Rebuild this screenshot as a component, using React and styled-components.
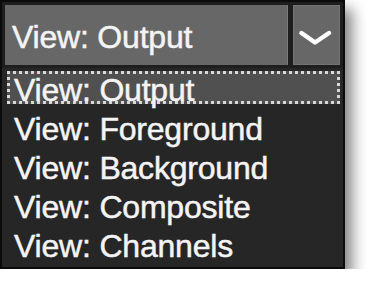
import React from 'react';
import styled, { createGlobalStyle } from 'styled-components';

const GlobalStyle = createGlobalStyle`
  html, body {
    margin: 0;
    padding: 0;
    background: #ffffff;
  }
`;

const Frame = styled.div`
  width: 341px;
  height: 265px;
  border: 2px solid #0b0b0b;
  background: #262626;
  box-shadow: 7px 9px 14px rgba(0, 0, 0, 0.5);
  display: flex;
  flex-direction: column;
  font-family: "Liberation Sans", Arial, sans-serif;
  font-size: 32px;
  letter-spacing: -0.2px;
  color: #f4f4f4;
  -webkit-text-stroke: 0.5px #f4f4f4;
`;

const Header = styled.div`
  display: flex;
  gap: 5px;
  padding: 3px;
  background: #1e1e1e;
`;

const Field = styled.div`
  flex: 1;
  height: 60px;
  box-sizing: border-box;
  padding: 4px 0 0 7px;
  line-height: 56px;
  background: #676767;
  box-shadow: inset -1px 0 0 #7a7a7a;
  white-space: nowrap;
`;

const ToggleButton = styled.div`
  width: 47px;
  height: 60px;
  display: flex;
  align-items: center;
  justify-content: center;
  background: #676767;
  box-shadow: inset 0 0 0 1px #747474;
`;

const List = styled.ul`
  list-style: none;
  margin: 0;
  padding: 3px 0 0 2px;
`;

const Item = styled.li`
  position: relative;
  isolation: isolate;
  height: 39px;
  line-height: 39px;
  padding-left: 10px;
  white-space: nowrap;

  &::before {
    content: '';
    display: ${(props) => (props.$active ? 'block' : 'none')};
    position: absolute;
    z-index: -1;
    left: 3px;
    top: 0;
    width: 333px;
    height: 33px;
    box-sizing: border-box;
    border: 3px dotted #d8d8d8;
    background: #505050;
  }
`;

const views = ['Output', 'Foreground', 'Background', 'Composite', 'Channels'];

const Chevron = () => (
  <svg width="47" height="60" viewBox="0 0 47 60">
    <polyline
      points="8.5,28 22,37.5 36,28"
      fill="none"
      stroke="#ffffff"
      strokeWidth="4.5"
      strokeLinecap="round"
      strokeLinejoin="round"
    />
  </svg>
);

const App = () => (
  <>
    <GlobalStyle />
    <Frame>
      <Header>
        <Field>View: Output</Field>
        <ToggleButton>
          <Chevron />
        </ToggleButton>
      </Header>
      <List>
        {views.map((view, i) => (
          <Item key={view} $active={i === 0}>
            View: {view}
          </Item>
        ))}
      </List>
    </Frame>
  </>
);

export default App;
